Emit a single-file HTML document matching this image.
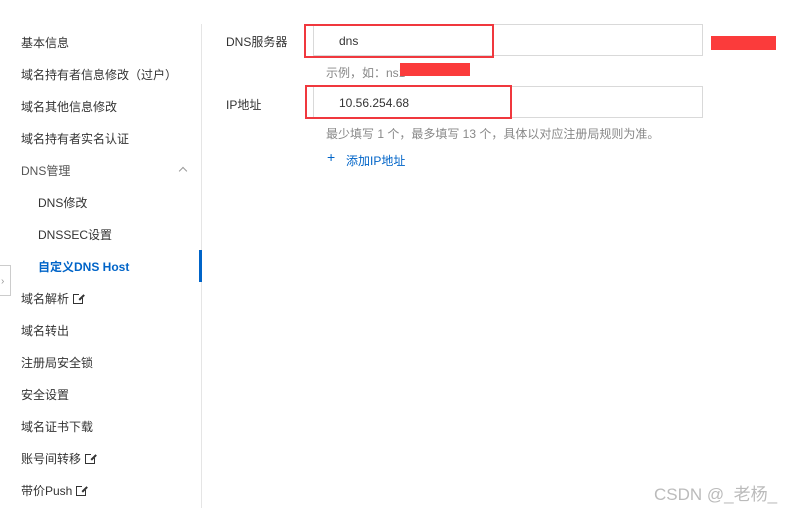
<!DOCTYPE html>
<html><head><meta charset="utf-8"><style>
body{margin:0;width:802px;height:508px;background:#fff;position:relative;overflow:hidden;font-family:"Liberation Sans","Noto Sans CJK SC",sans-serif;font-size:12px;color:#333}
.it{position:absolute;left:21px;white-space:nowrap;line-height:14px}
.sub{left:38px}
.ext{display:inline-block;width:8px;height:8px;border:1.5px solid #333;margin-left:4px;vertical-align:-1px;position:relative}
.ext:after{content:"";position:absolute;right:-3px;top:-3px;width:6px;height:6px;background:#fff}
.ext:before{content:"";position:absolute;right:-2px;top:-1px;width:7px;height:1.5px;background:#333;transform:rotate(-45deg);transform-origin:right;z-index:1}
.abs{position:absolute}
.inp{position:absolute;border:1px solid #d9d9d9;background:#fff}
.red{position:absolute;border:2px solid #f0383e}
.rf{position:absolute;background:#fb3b3b}
</style></head><body>
<div class="abs" style="left:201px;top:24px;width:1px;height:484px;background:#e5e5e5"></div>
<div class="abs" style="left:199px;top:250px;width:3px;height:32px;background:#0064c8"></div>
<div class="abs" style="left:-1px;top:265px;width:10px;height:29px;border:1px solid #ccc;background:#fff"></div>
<div class="abs" style="left:1px;top:276px;color:#999;font-size:10px">›</div>
<div class="it" style="top:36px">基本信息</div>
<div class="it" style="top:68px">域名持有者信息修改（过户）</div>
<div class="it" style="top:100px">域名其他信息修改</div>
<div class="it" style="top:132px">域名持有者实名认证</div>
<div class="it" style="top:164px;color:#555">DNS管理</div>
<div class="abs" style="left:180px;width:5px;height:5px;border-left:1px solid #999;border-top:1px solid #999;transform:rotate(45deg);top:168px"></div>
<div class="it sub" style="top:196px">DNS修改</div>
<div class="it sub" style="top:228px">DNSSEC设置</div>
<div class="it sub" style="top:260px;color:#0064c8;font-weight:bold">自定义DNS Host</div>
<div class="it" style="top:292px">域名解析<span class="ext"></span></div>
<div class="it" style="top:324px">域名转出</div>
<div class="it" style="top:356px">注册局安全锁</div>
<div class="it" style="top:388px">安全设置</div>
<div class="it" style="top:420px">域名证书下载</div>
<div class="it" style="top:452px">账号间转移<span class="ext"></span></div>
<div class="it" style="top:484px">带价Push<span class="ext"></span></div>

<div class="abs" style="left:226px;top:33px">DNS服务器</div>
<div class="inp" style="left:313px;top:24px;width:388px;height:30px"></div>
<div class="red" style="left:304px;top:24px;width:186px;height:30px"></div>
<div class="abs" style="left:339px;top:34px">dns</div>
<div class="rf" style="left:711px;top:36px;width:65px;height:14px"></div>
<div class="abs" style="left:326px;top:64px;color:#888">示例，如：ns1</div>
<div class="rf" style="left:400px;top:63px;width:70px;height:13px"></div>

<div class="abs" style="left:226px;top:96px">IP地址</div>
<div class="inp" style="left:313px;top:86px;width:388px;height:30px"></div>
<div class="red" style="left:305px;top:85px;width:203px;height:30px"></div>
<div class="abs" style="left:339px;top:96px">10.56.254.68</div>
<div class="abs" style="left:326px;top:125px;color:#888">最少填写 1 个，最多填写 13 个，具体以对应注册局规则为准。</div>
<div class="abs" style="left:327px;top:149px;color:#0064c8;font-size:14px">+</div>
<div class="abs" style="left:346px;top:152px;color:#0064c8">添加IP地址</div>
<div class="abs" style="left:654px;top:480px;color:#bbb;font-size:17px">CSDN @_老杨_</div>
</body></html>
